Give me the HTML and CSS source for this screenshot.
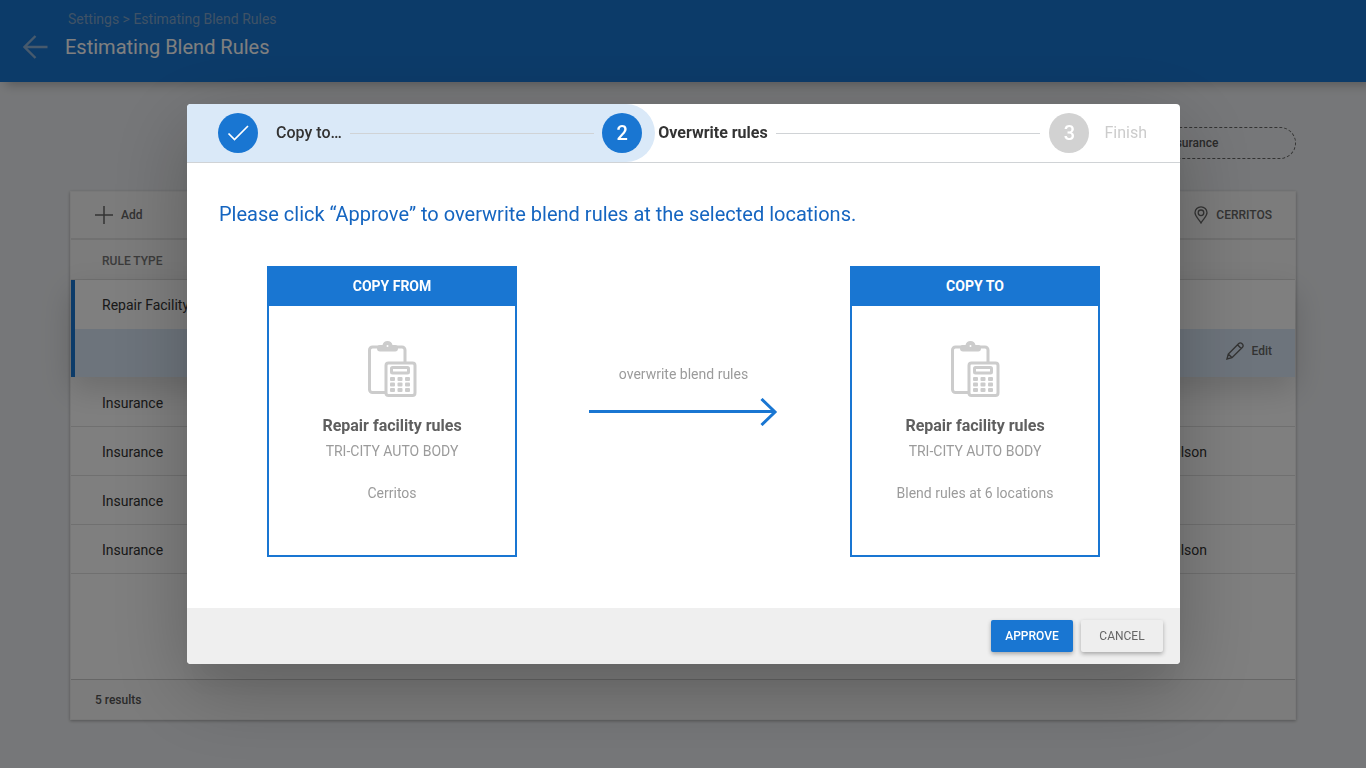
FILE: index.html
```html
<!DOCTYPE html>
<html lang="en">
<head>
<meta charset="utf-8">
<meta name="viewport" content="width=device-width, initial-scale=1">
<title>Estimating Blend Rules</title>
<link rel="stylesheet" href="styles.css">
</head>
<body>
<svg class="sprite" aria-hidden="true">
  <symbol id="clipboard" viewBox="0 0 49 56">
    <path d="M27 51.500H4.500a3 3 0 0 1-3-3V9a3 3 0 0 1 3-3H34a3 3 0 0 1 3 3v12" fill="none" stroke="#ccc" stroke-width="3"/>
    <path d="M12 10.500q-3 0-3-3.200t3-3.300h2.500q1-4 5-4t5 4H27q3 0 3 3.300t-3 3.200z" fill="#ccc"/>
    <circle cx="19.500" cy="5" r="1" fill="#fff"/>
    <rect x="18" y="22" width="29" height="32.500" rx="2.500" fill="#fff" stroke="#ccc" stroke-width="3"/>
    <rect x="23.500" y="26.500" width="17" height="5.500" rx="1" fill="#fff" stroke="#ccc" stroke-width="3"/>
    <g fill="#ccc">
      <rect x="22" y="36" width="5" height="4" rx="1"/><rect x="29.500" y="36" width="5" height="4" rx="1"/><rect x="37" y="36" width="5" height="4" rx="1"/>
      <rect x="22" y="41.500" width="5" height="4" rx="1"/><rect x="29.500" y="41.500" width="5" height="4" rx="1"/><rect x="37" y="41.500" width="5" height="4" rx="1"/>
      <rect x="22" y="47" width="5" height="4" rx="1"/><rect x="29.500" y="47" width="5" height="4" rx="1"/><rect x="37" y="47" width="5" height="4" rx="1"/>
    </g>
  </symbol>
</svg>

<div class="page">
  <header class="topbar">
    <button class="back" type="button" aria-label="Back">
      <svg width="26" height="24" viewBox="0 0 26 24"><path d="M24.500 12H1.500M12.500 1L1.500 12l11 11" fill="none" stroke="currentColor" stroke-width="2.400"/></svg>
    </button>
    <div class="headings">
      <nav class="crumbs">Settings &gt; Estimating Blend Rules</nav>
      <h1>Estimating Blend Rules</h1>
    </div>
  </header>

  <main class="content">
    <div class="filters"><button class="pill" type="button">Insurance</button></div>
    <section class="panel">
      <div class="toolbar">
        <button class="tool" type="button">
          <svg width="18" height="18" viewBox="0 0 18 18"><path d="M9 0v18M0 9h18" stroke="currentColor" stroke-width="1.500"/></svg>
          Add
        </button>
        <button class="tool" type="button">
          <svg width="14" height="18" viewBox="0 0 14 18"><g fill="none" stroke="currentColor" stroke-width="1.300"><path d="M7 17C5 13 1 10.500 1 6.800a6 6 0 0 1 12 0C13 10.500 9 13 7 17z"/><circle cx="7" cy="6.800" r="2.800"/></g></svg>
          CERRITOS
        </button>
      </div>
      <table class="rules">
        <thead><tr><th scope="col">RULE TYPE</th><th></th></tr></thead>
        <tbody class="selected">
          <tr><td>Repair Facility</td><td></td></tr>
          <tr class="actions"><td colspan="2">
            <button class="tool" type="button">
              <svg width="18" height="18" viewBox="0 0 18 18"><path d="M1 17l1.300-5L12.800 1.500a2.100 2.100 0 0 1 3 0l.7.700a2.100 2.100 0 0 1 0 3L6 15.700zM2.300 12L6 15.700M11.500 2.800l3.700 3.700" fill="none" stroke="currentColor" stroke-width="1.400"/></svg>
              Edit
            </button>
          </td></tr>
        </tbody>
        <tbody class="others">
          <tr><td>Insurance</td><td></td></tr>
          <tr><td>Insurance</td><td>Wilson</td></tr>
          <tr><td>Insurance</td><td></td></tr>
          <tr><td>Insurance</td><td>Wilson</td></tr>
        </tbody>
      </table>
      <footer class="results">5 results</footer>
    </section>
  </main>
</div>

<div class="overlay">
  <div class="dialog" role="dialog" aria-modal="true" aria-labelledby="prompt">
    <ol class="steps">
      <li class="step done">
        <span class="badge"><svg width="22" height="16" viewBox="0 0 22 16"><path d="M1.500 8.500L7.500 14.500L21 1" fill="none" stroke="#fff" stroke-width="1.700"/></svg></span>
        <span class="label">Copy to…</span><span class="line"></span>
      </li>
      <li class="step current">
        <span class="cap"><span class="badge">2</span></span>
        <span class="label">Overwrite rules</span><span class="line"></span>
      </li>
      <li class="step todo">
        <span class="badge">3</span><span class="label">Finish</span>
      </li>
    </ol>
    <div class="body">
      <h2 id="prompt">Please click “Approve” to overwrite blend rules at the selected locations.</h2>
      <div class="transfer">
        <article class="card">
          <h3>COPY FROM</h3>
          <svg class="art" width="49" height="56"><use href="#clipboard"/></svg>
          <strong>Repair facility rules</strong>
          <p>TRI-CITY AUTO BODY</p>
          <p class="where">Cerritos</p>
        </article>
        <div class="arrow">
          <span>overwrite blend rules</span>
          <svg width="190" height="28" viewBox="0 0 190 28"><path d="M0 13.500H186M172.500 1L186 14L172.500 27" fill="none" stroke="#1976d2" stroke-width="3"/></svg>
        </div>
        <article class="card">
          <h3>COPY TO</h3>
          <svg class="art" width="49" height="56"><use href="#clipboard"/></svg>
          <strong>Repair facility rules</strong>
          <p>TRI-CITY AUTO BODY</p>
          <p class="where">Blend rules at 6 locations</p>
        </article>
      </div>
    </div>
    <div class="buttons">
      <button class="btn primary" type="button">APPROVE</button>
      <button class="btn" type="button">CANCEL</button>
    </div>
  </div>
</div>
</body>
</html>
```
FILE: styles.css
```css
* { box-sizing: border-box; }
body {
  margin: 0;
  font: 14px/20px Roboto, sans-serif;
  color: #333;
  background: #edeff2;
}
h1, h2, h3, p, ol { margin: 0; padding: 0; font-weight: 400; }
button { font: inherit; color: inherit; background: none; border: 0; padding: 0; cursor: pointer; }
svg { display: block; flex: none; }
.sprite { position: absolute; width: 0; height: 0; }

.page { min-height: 100vh; display: flex; flex-direction: column; }
.topbar {
  display: flex;
  align-items: flex-end;
  gap: 16px;
  height: 82px;
  padding: 0 23px 21px;
  color: #fff;
  background: #1976d2;
  box-shadow: 6px 3px 10px rgba(0, 0, 0, .25);
}
.back { color: #8fb4da; padding-bottom: 2px; }
.crumbs { padding-left: 3px; color: #7fa5cc; }
.topbar h1 { font-size: 20px; line-height: 28px; padding-top: 4px; }

.content { flex: 1; display: flex; flex-direction: column; padding: 45px 70px 48px; }
.filters { display: flex; justify-content: flex-end; margin-bottom: 32px; }
.pill {
  width: 208px;
  height: 32px;
  border: 1px dashed #666;
  border-radius: 16px;
  font-size: 12px;
  font-weight: 500;
  color: #555;
}
.panel {
  flex: 1;
  display: flex;
  flex-direction: column;
  background: #fff;
  border: 1px solid #f0f0f0;
  box-shadow: 0 1px 3px rgba(0, 0, 0, .3);
}
.toolbar {
  display: flex;
  justify-content: space-between;
  align-items: center;
  height: 48px;
  padding: 0 23px 0 24px;
  background: #f8f8f8;
  border-bottom: 2px solid #e2e2e2;
}
.tool {
  display: inline-flex;
  align-items: center;
  gap: 8px;
  font-size: 12px;
  font-weight: 500;
  color: #666;
}
.rules { width: 100%; border-spacing: 0; }
.rules th {
  height: 40px;
  padding: 3px 31px 0;
  text-align: left;
  font-size: 12px;
  font-weight: 500;
  color: #777;
  background: #f8f8f8;
  border-bottom: 1px solid #e0e0e0;
}
.rules td { height: 49px; padding: 0 31px; }
.rules td:last-child { text-align: right; padding-right: 88px; }
.others td { padding-top: 2px; border-bottom: 1px solid #e0e0e0; }
.others tr:first-child td { height: 50px; }
.rules .selected { position: relative; box-shadow: 0 12px 30px rgba(0, 0, 0, .16); }
.selected td { background: #fff; }
.selected td:first-child { border-left: 4px solid #1976d2; padding-left: 27px; }
.selected .actions td { height: 48px; padding-right: 23px; background: #dbe9f8; }
.results {
  margin-top: auto;
  height: 40px;
  padding: 10px 24px;
  font-size: 12px;
  font-weight: 500;
  color: #555;
  background: #f8f8f8;
  border-top: 1px solid #ccc;
}

.overlay {
  position: fixed;
  inset: 0;
  display: flex;
  align-items: center;
  padding: 0 186px 0 187px;
  background: rgba(0, 0, 0, .5);
}
.dialog {
  flex: 1;
  overflow: hidden;
  background: #fff;
  border-radius: 4px;
  box-shadow: 0 27px 24px rgba(0, 0, 0, .03), 0 24px 80px rgba(0, 0, 0, .25);
}
.steps { display: flex; list-style: none; border-bottom: 1px solid #d0d3d6; }
.step { display: flex; align-items: center; height: 58px; font-size: 16px; }
.done { flex: 376 1 0; padding: 0 8px 0 31px; background: #dae9f8; }
.current { flex: 438 1 0; padding-right: 9px; }
.todo { padding-right: 33px; color: #ccc; }
.cap { padding: 9px 13px 9px 0; margin-right: 3px; background: #dae9f8; border-radius: 0 29px 29px 0; }
.badge {
  display: flex;
  align-items: center;
  justify-content: center;
  width: 40px;
  height: 40px;
  border-radius: 50%;
  font-size: 20px;
  font-weight: 500;
  color: #fff;
  background: #1976d2;
}
.todo .badge { background: #d2d2d2; margin-right: 15px; }
.label { line-height: 22px; }
.done .label { margin-left: 18px; font-weight: 500; }
.current .label { font-weight: 700; }
.line { flex: 1; height: 1px; margin-left: 8px; background: #d0d3d6; }

.body { padding: 37px 32px 51px; }
.body h2 { font-size: 20px; line-height: 28px; color: #1565c0; }
.transfer { display: flex; justify-content: space-between; padding: 38px 48px 0; }
.card {
  display: flex;
  flex-direction: column;
  align-items: center;
  width: 250px;
  height: 291px;
  border: 2px solid #1976d2;
  color: #9b9b9b;
}
.card h3 {
  align-self: stretch;
  padding-bottom: 2px;
  line-height: 36px;
  text-align: center;
  font-size: 14px;
  font-weight: 700;
  color: #fff;
  background: #1976d2;
}
.art { margin: 35px 0 19px; }
.card strong { font-size: 16px; color: #5f5f5f; margin-bottom: 5px; }
.card .where { margin-top: 22px; }
.arrow { display: flex; flex-direction: column; align-items: center; gap: 14px; padding-top: 98px; color: #9b9b9b; }
.buttons { display: flex; justify-content: flex-end; gap: 8px; padding: 12px 17px; background: #efefef; }
.btn {
  min-width: 82px;
  height: 32px;
  border-radius: 2px;
  font-size: 12px;
  color: #666;
  background: #eee;
  box-shadow: 0 2px 4px rgba(0, 0, 0, .3);
}
.primary { font-weight: 500; color: #fff; background: #1976d2; }
```
